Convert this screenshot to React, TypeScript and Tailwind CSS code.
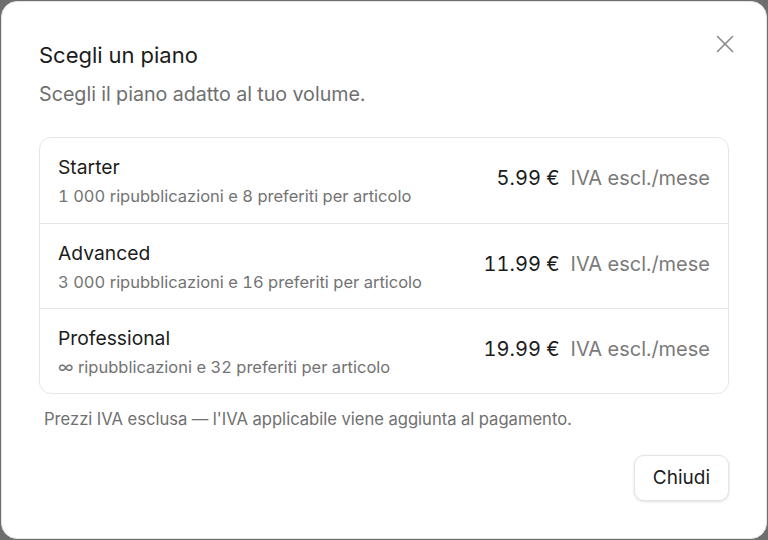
import { X } from "lucide-react";

const plans = [
  { name: "Starter", desc: "1 000 ripubblicazioni e 8 preferiti per articolo", price: "5.99 €" },
  { name: "Advanced", desc: "3 000 ripubblicazioni e 16 preferiti per articolo", price: "11.99 €" },
  { name: "Professional", desc: "∞ ripubblicazioni e 32 preferiti per articolo", price: "19.99 €" },
];

export default function App() {
  return (
    <div className="h-[540px] w-[768px] bg-[#6e6e6e] p-px font-['Inter',sans-serif] tabular-nums">
      <div className="relative flex h-full flex-col rounded-2xl border border-[#e4e4e4] bg-white px-[37px] pt-[39px]">
        <button className="absolute right-[26px] top-[27px] text-[#8a8a8a]">
          <X size={30} strokeWidth={1.3} />
        </button>
        <h2 className="text-[22px] leading-[28px] text-[#1c1c1c]">Scegli un piano</h2>
        <p className="mt-[13px] text-[19.7px] leading-[24px] text-[#6f6f6f]">Scegli il piano adatto al tuo volume.</p>

        <div className="mt-[31px] rounded-xl border border-[#e6e6e6]">
          {plans.map((p, i) => (
            <div
              key={p.name}
              className={`flex h-[85px] items-center justify-between px-[18px] ${i > 0 ? "border-t border-[#e6e6e6]" : ""}`}
            >
              <div className="flex flex-col">
                <span className="text-[19.3px] leading-[24px] text-[#1c1c1c]">{p.name}</span>
                <span className="mt-[7px] text-[16.5px] leading-[20px] text-[#737373]">{p.desc}</span>
              </div>
              <div className="flex items-baseline gap-[11px] pb-[5px] text-[20px]">
                <span className="text-[#1c1c1c]">{p.price}</span>
                <span className="text-[#7a7a7a]">IVA escl./mese</span>
              </div>
            </div>
          ))}
        </div>

        <p className="ml-[5px] mt-[15px] text-[16.6px] leading-[20px] text-[#707070]">
          Prezzi IVA esclusa — l'IVA applicabile viene aggiunta al pagamento.
        </p>

        <div className="mt-[26px] flex justify-end">
          <button className="h-[46px] rounded-[10px] border border-[#e4e4e4] bg-white px-[18px] text-[19px] text-[#1c1c1c] shadow-[0_1px_3px_rgba(0,0,0,0.12)]">
            Chiudi
          </button>
        </div>
      </div>
    </div>
  );
}
